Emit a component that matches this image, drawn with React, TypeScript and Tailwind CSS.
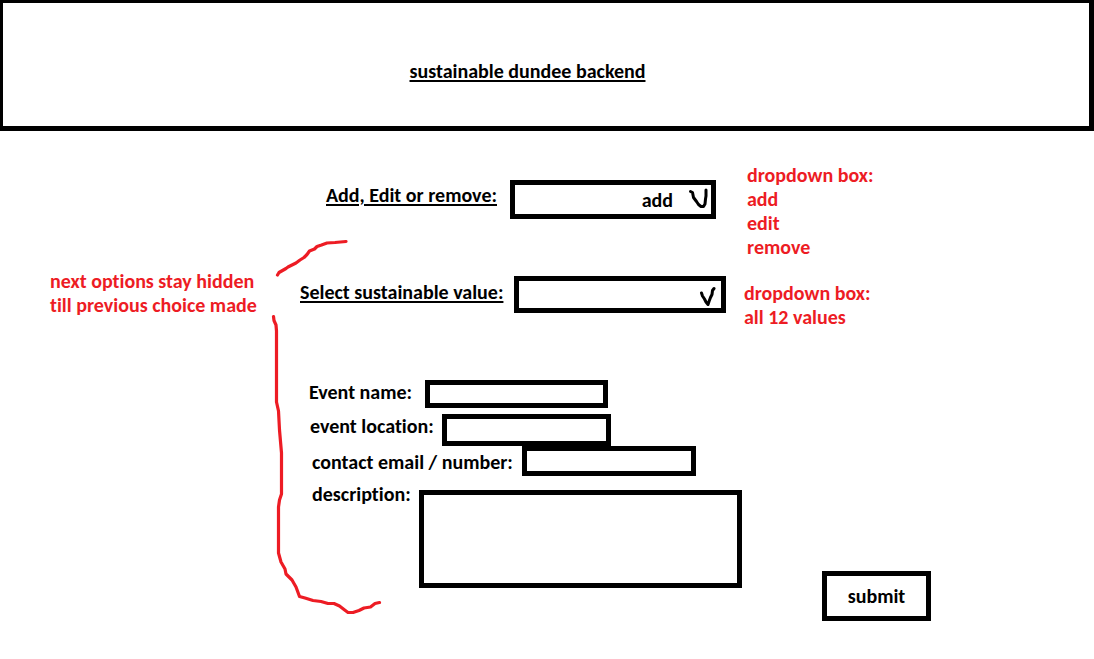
import { useState } from "react";
import type { ReactNode } from "react";

const values = Array.from({ length: 12 }, (_, i) => `value ${i + 1}`);

function Note({ children, className = "" }: { children: ReactNode; className?: string }) {
  return <div className={`shrink-0 whitespace-nowrap text-[#ed1c24] ${className}`}>{children}</div>;
}

function BracketStroke() {
  return (
    <svg
      className="pointer-events-none absolute left-[265px] top-[105px]"
      width="120"
      height="384"
      viewBox="265 236 120 384"
      fill="none"
      stroke="#ed1c24"
      strokeWidth="3.2"
      strokeLinecap="round"
      strokeLinejoin="round"
      aria-hidden="true"
    >
      <path d="M277.500 275L279 272.500L286 268.500L288 267L296 263L300 260L304 257.500L307 254.500L309.500 251L314.500 249L317 246.500L321.500 245L327 243L335 242.500L346 241.500" />
      <path d="M273.500 316.500L274 320.500L276 325L276.500 331V402L278.500 411L279.500 430L281.500 453V494L279.500 500L278.500 507V553L281 562L285 569L286 574L292 580L296 587L299.500 596.500L305 598L313 600.500L321 601.500L328 603.500H334L339.500 606L344 609.500L348 612.500H353L359 610.500L364 608L370.500 607L375 603.500L379.500 602.500" />
    </svg>
  );
}

export default function App() {
  const [action, setAction] = useState("add");
  const [value, setValue] = useState("");

  return (
    <div className="min-h-screen bg-white font-['Carlito','Lato',sans-serif] text-[20px] font-bold leading-6 text-black [font-variant-ligatures:none]">
      <header className="flex h-[131px] items-center justify-center border-b-[5px] border-l-[3px] border-r-[5px] border-t-[3px] border-black pr-[37px] pt-[13px]">
        <h1 className="underline decoration-2 underline-offset-2">sustainable dundee backend</h1>
      </header>

      <main className="relative flex pt-8">
        <aside className="w-[300px] shrink-0 pl-[50px] pt-[106px]">
          <Note>
            next options stay hidden
            <br />
            till previous choice made
          </Note>
        </aside>
        <BracketStroke />

        <form className="min-w-0 flex-1" onSubmit={(e) => e.preventDefault()}>
          <div className="flex items-start pl-[26px]">
            <label htmlFor="action" className="mt-5 w-[184px] shrink-0 whitespace-nowrap underline decoration-2 underline-offset-2">
              Add, Edit or remove:
            </label>
            <div className="relative mt-[17px] w-[206px] shrink-0">
              <select
                id="action"
                value={action}
                onChange={(e) => setAction(e.target.value)}
                className="block h-[39px] w-full appearance-none border-[5px] border-black bg-white pr-[38px] [text-align-last:right]"
              >
                <option>add</option>
                <option>edit</option>
                <option>remove</option>
              </select>
              <svg className="pointer-events-none absolute right-2 top-[7px] h-[22px] w-5" viewBox="688 187 20 22" fill="none" stroke="currentColor" strokeWidth="3" strokeLinecap="round" strokeLinejoin="round" aria-hidden="true">
                <path d="M690.500 191.500l2 1 1 5 3 4 2 3 2.500 2h2.500l1.500-2.500.5-5 .5-3v-6" />
              </svg>
            </div>
            <Note className="ml-[31px]">
              dropdown box:
              <br />
              add
              <br />
              edit
              <br />
              remove
            </Note>
          </div>

          <div className="mt-[17px] flex items-start">
            <label htmlFor="value" className="mt-1 w-[214px] shrink-0 whitespace-nowrap underline decoration-2 underline-offset-2">
              Select sustainable value:
            </label>
            <div className="relative w-[212px] shrink-0">
              <select
                id="value"
                value={value}
                onChange={(e) => setValue(e.target.value)}
                className="block h-[37px] w-full appearance-none border-[5px] border-black bg-white pr-[38px] [text-align-last:right]"
              >
                <option value="" />
                {values.map((v) => (
                  <option key={v}>{v}</option>
                ))}
              </select>
              <svg className="pointer-events-none absolute right-2 top-2 h-[22px] w-5" viewBox="698 284 20 22" fill="none" stroke="currentColor" strokeWidth="3" strokeLinecap="round" strokeLinejoin="round" aria-hidden="true">
                <path d="M701.500 293l1 3 2 3 1.500 3 2 2.500 1-3 1.500-4 1.500-3 .5-4 1.500-2" />
              </svg>
            </div>
            <Note className="ml-[18px] mt-[5px]">
              dropdown box:
              <br />
              all 12 values
            </Note>
          </div>

          <div className="mt-[51px] flex items-start pl-[9px]">
            <label htmlFor="name" className="w-[116px] shrink-0 whitespace-nowrap">Event name:</label>
            <input id="name" type="text" className="h-7 w-[183px] border-[5px] border-black px-1" />
          </div>
          <div className="mt-[6px] flex items-start pl-[10px]">
            <label htmlFor="location" className="w-[132px] shrink-0 whitespace-nowrap">event location:</label>
            <input id="location" type="text" className="h-8 w-[169px] border-[5px] border-black px-1" />
          </div>
          <div className="flex items-start pl-3">
            <label htmlFor="contact" className="mt-1 w-[210px] shrink-0 whitespace-nowrap">contact email / number:</label>
            <input id="contact" type="text" className="h-[30px] w-[174px] border-[5px] border-black px-1" />
          </div>
          <div className="mt-[6px] flex items-start pl-3">
            <label htmlFor="description" className="w-[107px] shrink-0 whitespace-nowrap">description:</label>
            <textarea id="description" className="mt-2 block h-[98px] w-[323px] resize-none border-[5px] border-black px-1" />
            <button type="submit" className="ml-20 mt-[89px] h-[50px] w-[109px] shrink-0 border-[5px] border-black bg-white">
              submit
            </button>
          </div>
        </form>
      </main>
    </div>
  );
}
